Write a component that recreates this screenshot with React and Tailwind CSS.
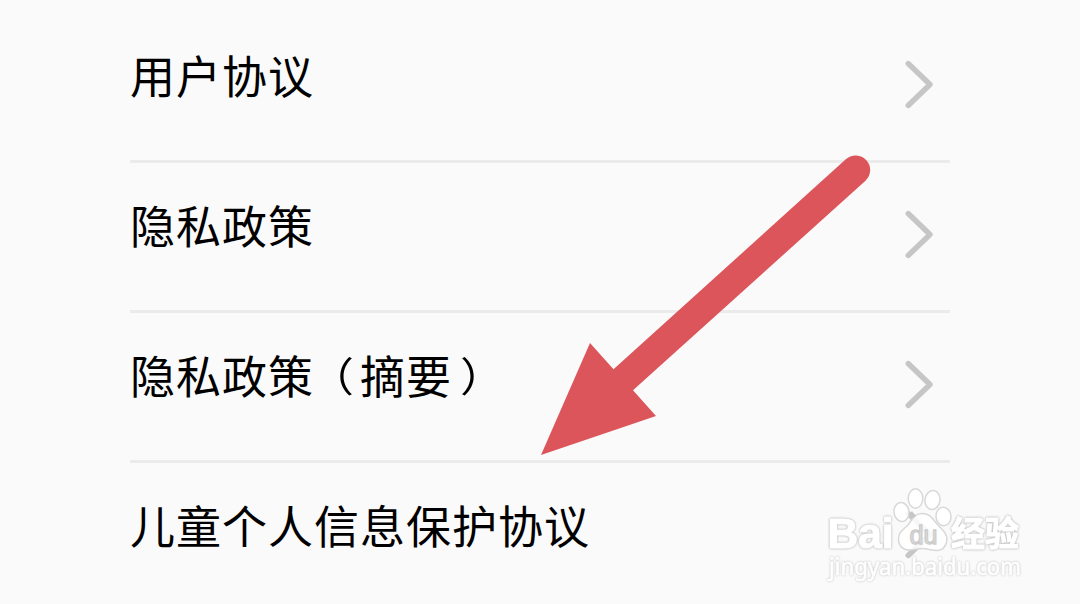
const items = ["用户协议", "隐私政策", "隐私政策（摘要）", "儿童个人信息保护协议"];

function Chevron() {
  return (
    <svg className="mt-[15px] mr-[14px] h-[50px] w-8 shrink-0" viewBox="0 0 32 50" fill="none">
      <path d="M4.200 3.500 26 24.500 4.200 45.500" stroke="#c6c6c6" strokeWidth="5.400" strokeLinecap="round" strokeLinejoin="round" />
    </svg>
  );
}

function Label({ text }) {
  return (
    <span className="text-[45px] leading-[60px] tracking-[1px] whitespace-nowrap text-black">
      {text.split(/([（）])/).map((part, i) => {
        if (part === "（") return <span key={i} className="relative -left-[5px] inline-block scale-y-90">{part}</span>;
        if (part === "）") return <span key={i} className="relative left-[8px] inline-block scale-y-90">{part}</span>;
        return part;
      })}
    </span>
  );
}

function Arrow() {
  return (
    <svg className="pointer-events-none absolute top-[150px] left-[530px] h-[320px] w-[350px]" viewBox="530 150 350 320">
      <path
        d="M541 455 590 343 613.500 369.300 845.800 159.300A14.500 14.500 0 0 1 865.500 180.700L633 390.300 656 416Z"
        fill="#dc555b"
      />
    </svg>
  );
}

function Watermark() {
  return (
    <svg className="pointer-events-none absolute top-[480px] left-[820px] h-[110px] w-[215px]" viewBox="820 480 215 110">
      <g fill="#fff" stroke="#fff" strokeWidth="1.200" strokeLinejoin="round" className="[filter:drop-shadow(0_0_0.8px_#b8b8b8)_drop-shadow(0_0_0.6px_#dcdcdc)]">
        <text x="827.500" y="548" fontSize="43" fontWeight="700" textLength="66" lengthAdjust="spacingAndGlyphs" className="font-['Liberation_Sans',sans-serif]">Bai</text>
        <text x="951" y="545.500" fontSize="34" fontWeight="700" textLength="68" className="font-['Noto_Sans_CJK_SC',sans-serif]">经验</text>
      </g>
      <text x="829" y="575" fontSize="23" textLength="192" lengthAdjust="spacingAndGlyphs" fill="#fff" stroke="#fff" strokeWidth="0.600" className="font-['Noto_Sans',sans-serif] [filter:drop-shadow(0_0_0.8px_#bebebe)]">jingyan.baidu.com</text>
      <g fill="#fff" fillOpacity="0.850" stroke="#d8d8d8" strokeWidth="1.500">
        <ellipse cx="901.500" cy="512" rx="7.500" ry="9.500" transform="rotate(-8 901.500 512)" />
        <ellipse cx="915.500" cy="498.500" rx="7.300" ry="9.700" />
        <ellipse cx="932.500" cy="500" rx="7.500" ry="9.500" transform="rotate(8 932.500 500)" />
        <ellipse cx="943.500" cy="516.500" rx="7.500" ry="9.300" transform="rotate(-5 943.500 516.500)" />
        <path d="M922 513.500C914 513.500 912 520 908 525C903 530 898.500 532 898.500 539C898.500 546 903 550 909 550C915 550 917 548.500 922 548.500C928 548.500 931 550.500 937 550.500C943 550.500 947 545 947 539C947 532 941 529 937 524C932 518 930 513.500 922 513.500Z" />
      </g>
      <path d="m910.500 512.500 4 4.500" stroke="#c6c6c6" strokeWidth="4" />
      <text x="909.500" y="543.500" fontSize="25" fill="#dedede" stroke="#cccccc" strokeWidth="1.300" textLength="28" lengthAdjust="spacingAndGlyphs" className="font-['Liberation_Sans',sans-serif]">du</text>
    </svg>
  );
}

export default function App() {
  return (
    <main className="relative h-[604px] overflow-hidden bg-[#fafafa] px-[130px] pt-[10px] font-['Noto_Sans_CJK_SC',sans-serif]">
      <ul>
        {items.map((label) => (
          <li key={label} className="flex h-[150px] items-start justify-between border-t-[3px] border-[#ebebeb] pt-[32px] first:border-transparent">
            <Label text={label} />
            <Chevron />
          </li>
        ))}
      </ul>
      <Arrow />
      <Watermark />
    </main>
  );
}
